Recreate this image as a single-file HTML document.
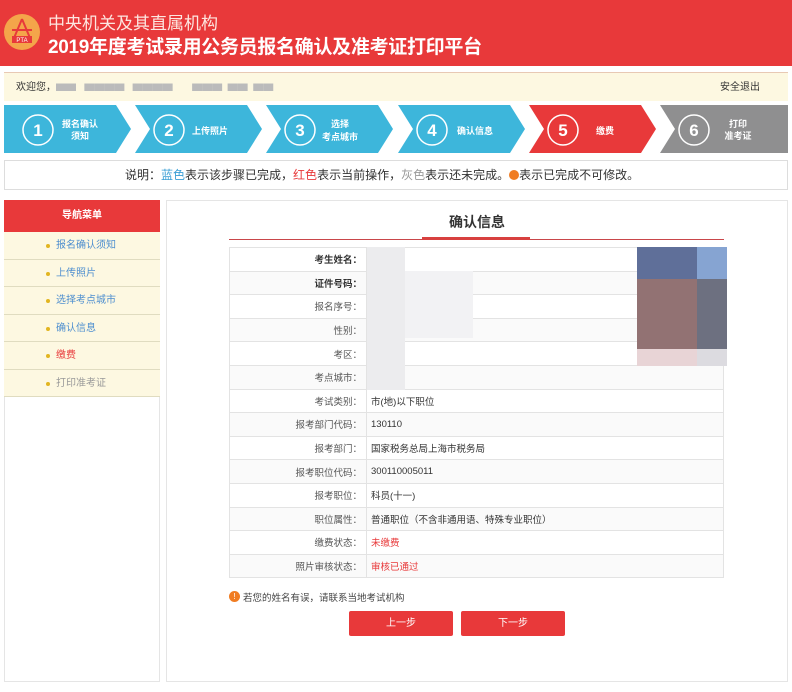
<!DOCTYPE html>
<html><head><meta charset="utf-8"><style>
*{margin:0;padding:0;box-sizing:border-box}
body{width:792px;height:692px;background:#fff;font-family:"Liberation Sans","Noto Sans CJK SC",sans-serif;position:relative;overflow:hidden;color:#333}
.abs{position:absolute}
.hdr{left:0;top:0;width:792px;height:66px;background:#e8393a}
.logo{left:4px;top:14px;width:36px;height:36px;border-radius:50%;background:#f4a54a}
.t1{left:48px;top:9px;color:#fde6e0;font-size:17px}
.t2{left:48px;top:32px;color:#fff;font-size:19px;font-weight:bold;letter-spacing:-0.3px}
.welcome{left:4px;top:72px;width:784px;height:29px;background:#fdf8e1;border-top:1px solid #e8c9b4;font-size:10px;line-height:29px;padding-left:12px}
.note{left:4px;top:160px;width:784px;height:30px;border:1px solid #ddd;font-size:12px;line-height:28px;padding-left:120px}
.side{left:4px;top:200px;width:156px;height:482px;border:1px solid #e5e5e5}
.sh{left:4px;top:200px;width:156px;height:32px;background:#e8393a;color:#fff;font-size:10px;text-align:center;line-height:32px;font-weight:bold}
.mi{left:4px;width:156px;height:27.5px;background:#fdf8e1;border-bottom:1px solid #e0dcc0;font-size:10px;line-height:27px;padding-left:52px;color:#4f8fcf}
.mi:before{content:"";position:absolute;left:42px;top:12px;width:4px;height:4px;border-radius:50%;background:#e2b520}
.main{left:166px;top:200px;width:622px;height:482px;border:1px solid #e5e5e5}
table{position:absolute;left:229px;top:247px;width:495px;border-collapse:collapse;font-size:9.5px}
td{height:23.6px;border:1px solid #e3e3e3;padding:0 4px}
td.l{width:137px;text-align:right;color:#555}
tr:nth-child(even) td{background:#fafafa}
.btn{top:611px;width:104px;height:25px;background:#e8393a;color:#fff;font-size:10px;text-align:center;line-height:25px;border-radius:2px}
</style></head><body>
<div class="abs hdr"></div>
<div class="abs logo"><svg width="36" height="36"><path d="M18 5 L10 24 M18 5 L26 24 M8 16 L28 16" stroke="#e8393a" stroke-width="2" fill="none"/><rect x="8" y="22" width="20" height="7" fill="#e8393a"/><text x="18" y="28" fill="#fff" font-size="6" text-anchor="middle" font-family="Liberation Sans">PTA</text></svg></div>
<div class="abs t1">中央机关及其直属机构</div>
<div class="abs t2">2019年度考试录用公务员报名确认及准考证打印平台</div>
<div class="abs welcome">欢迎您，<span style="color:#bbb">▆▆ &nbsp; ▆▆▆▆ &nbsp; ▆▆▆▆ &nbsp; &nbsp; &nbsp; ▆▆▆ &nbsp;▆▆ &nbsp;▆▆</span><span style="position:absolute;right:28px">安全退出</span></div>
<svg class="abs" style="left:0;top:105px" width="792" height="48">
<g font-family="Liberation Sans,Noto Sans CJK SC,sans-serif">
<polygon points="4,0 116,0 131,24 116,48 4,48" fill="#3db6db"/>
<polygon points="135,0 247,0 262,24 247,48 135,48 150,24" fill="#3db6db"/>
<polygon points="266,0 378,0 393,24 378,48 266,48 281,24" fill="#3db6db"/>
<polygon points="398,0 510,0 525,24 510,48 398,48 413,24" fill="#3db6db"/>
<polygon points="529,0 641,0 656,24 641,48 529,48 544,24" fill="#e8393a"/>
<polygon points="660,0 788,0 788,48 660,48 675,24" fill="#8f8f90"/>
<g fill="none" stroke="#fff" stroke-width="1.5"><circle cx="38" cy="25" r="15"/><circle cx="169" cy="25" r="15"/><circle cx="300" cy="25" r="15"/><circle cx="432" cy="25" r="15"/><circle cx="563" cy="25" r="15"/><circle cx="694" cy="25" r="15"/></g>
<g fill="#fff" font-size="17" font-weight="bold" text-anchor="middle"><text x="38" y="31">1</text><text x="169" y="31">2</text><text x="300" y="31">3</text><text x="432" y="31">4</text><text x="563" y="31">5</text><text x="694" y="31">6</text></g>
<g fill="#fff" font-size="9" font-weight="bold" text-anchor="middle"><text x="80" y="22">报名确认</text><text x="80" y="34">须知</text><text x="210" y="29">上传照片</text><text x="340" y="22">选择</text><text x="340" y="35">考点城市</text><text x="475" y="29">确认信息</text><text x="605" y="29">缴费</text><text x="738" y="22">打印</text><text x="738" y="34">准考证</text></g>
</g></svg>
<div class="abs note">说明：<span style="color:#3a9ed5">蓝色</span>表示该步骤已完成，<span style="color:#e8393a">红色</span>表示当前操作，<span style="color:#999">灰色</span>表示还未完成。<span style="display:inline-block;width:10px;height:10px;border-radius:50%;background:#f07c22;vertical-align:-1px"></span>表示已完成不可修改。</div>
<div class="abs side"></div>
<div class="abs sh">导航菜单</div>
<div class="abs mi" style="top:232px">报名确认须知</div>
<div class="abs mi" style="top:259.5px">上传照片</div>
<div class="abs mi" style="top:287px">选择考点城市</div>
<div class="abs mi" style="top:314.5px">确认信息</div>
<div class="abs mi" style="top:342px;color:#e8393a">缴费</div>
<div class="abs mi" style="top:369.5px;color:#999">打印准考证</div>
<div class="abs main"></div>
<div class="abs" style="left:166px;top:212px;width:622px;text-align:center;font-size:14px;font-weight:bold">确认信息</div>
<div class="abs" style="left:229px;top:239px;width:495px;height:1px;background:#c9464a"></div>
<div class="abs" style="left:422px;top:237px;width:108px;height:3px;background:#d8403f"></div>
<table>
<tr><td class="l"><b style="color:#333">考生姓名：</b></td><td></td></tr>
<tr><td class="l"><b style="color:#333">证件号码：</b></td><td></td></tr>
<tr><td class="l">报名序号：</td><td></td></tr>
<tr><td class="l">性别：</td><td></td></tr>
<tr><td class="l">考区：</td><td></td></tr>
<tr><td class="l">考点城市：</td><td></td></tr>
<tr><td class="l">考试类别：</td><td>市(地)以下职位</td></tr>
<tr><td class="l">报考部门代码：</td><td>130110</td></tr>
<tr><td class="l">报考部门：</td><td>国家税务总局上海市税务局</td></tr>
<tr><td class="l">报考职位代码：</td><td>300110005011</td></tr>
<tr><td class="l">报考职位：</td><td>科员(十一)</td></tr>
<tr><td class="l">职位属性：</td><td>普通职位（不含非通用语、特殊专业职位）</td></tr>
<tr><td class="l">缴费状态：</td><td style="color:#e8393a">未缴费</td></tr>
<tr><td class="l">照片审核状态：</td><td style="color:#e8393a">审核已通过</td></tr>
</table>
<div class="abs" style="left:367px;top:247px;width:38px;height:143px;background:#ececee"></div>
<div class="abs" style="left:405px;top:271px;width:68px;height:67px;background:#f2f2f4"></div>
<div class="abs" style="left:637px;top:247px;width:60px;height:32px;background:#5f6f99"></div>
<div class="abs" style="left:697px;top:247px;width:30px;height:32px;background:#86a4d2"></div>
<div class="abs" style="left:637px;top:279px;width:60px;height:70px;background:#927273"></div>
<div class="abs" style="left:697px;top:279px;width:30px;height:70px;background:#6d7080"></div>
<div class="abs" style="left:637px;top:349px;width:60px;height:17px;background:#e8d4d6"></div>
<div class="abs" style="left:697px;top:349px;width:30px;height:17px;background:#dcdbe0"></div>
<div class="abs" style="left:229px;top:591px;width:11px;height:11px;border-radius:50%;background:#f07c22;color:#fff;font-size:8px;text-align:center;line-height:11px">!</div>
<div class="abs" style="left:243px;top:590px;font-size:9.5px;color:#444">若您的姓名有误，请联系当地考试机构</div>
<div class="abs btn" style="left:349px">上一步</div>
<div class="abs btn" style="left:461px">下一步</div>
</body></html>
